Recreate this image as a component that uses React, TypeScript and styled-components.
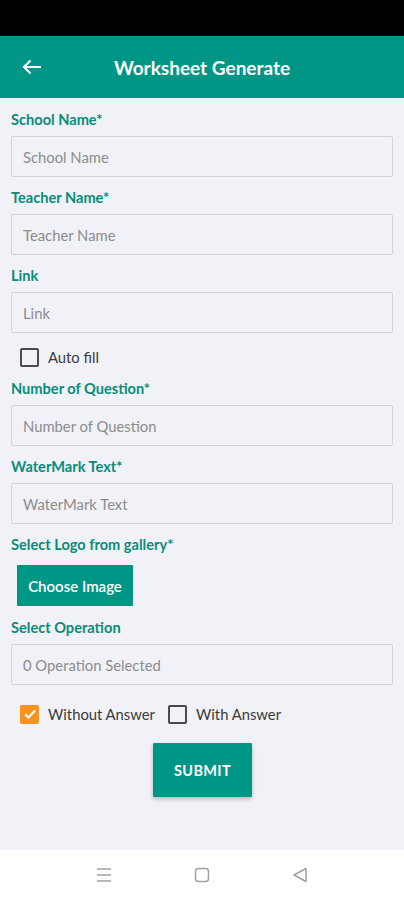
import styled, { createGlobalStyle } from 'styled-components';

const GlobalStyle = createGlobalStyle`
  html, body {
    margin: 0;
    padding: 0;
    background: #f1f2f7;
    font-family: Lato, "Noto Sans", sans-serif;
  }
  * { box-sizing: border-box; }
`;

const Screen = styled.div`
  display: flex;
  flex-direction: column;
  width: 404px;
  height: 900px;
  background: #f1f2f7;
`;

const StatusBar = styled.div`
  height: 36px;
  background: #000;
`;

const Header = styled.div`
  display: flex;
  align-items: center;
  height: 62px;
  background: #009685;
  padding-left: 22px;
`;

const BackButton = styled.div`
  display: flex;
  align-items: center;
  width: 20px;
  height: 20px;
`;

const Title = styled.div`
  flex: 1;
  text-align: center;
  margin-right: 42px;
  color: #fff;
  font-size: 19px;
  font-weight: 700;
`;

const Form = styled.div`
  display: flex;
  flex-direction: column;
  flex: 1;
  padding: 0 11px;
`;

const Label = styled.div<{ $top?: number; $bottom?: number }>`
  margin-top: ${(p) => p.$top ?? 12}px;
  margin-bottom: ${(p) => p.$bottom ?? 7}px;
  height: 18px;
  line-height: 18px;
  color: #078d7b;
  font-size: 14.6px;
  font-weight: 700;
`;

const Input = styled.div`
  display: flex;
  align-items: center;
  height: 41px;
  padding-left: 11px;
  border: 1.5px solid #d3d4d8;
  border-radius: 2px;
  color: #8c8c8c;
  font-size: 14.8px;
`;

const CheckRow = styled.div<{ $top: number }>`
  display: flex;
  align-items: center;
  height: 20px;
  margin-top: ${(p) => p.$top}px;
  padding-left: 9px;
`;

const CheckItem = styled.div`
  display: flex;
  align-items: center;
  margin-right: 13px;
`;

const Box = styled.div<{ $checked?: boolean }>`
  display: flex;
  align-items: center;
  justify-content: center;
  width: 19px;
  height: 19px;
  border-radius: 2px;
  border: ${(p) => (p.$checked ? 'none' : '2px solid #4a4a4a')};
  background: ${(p) => (p.$checked ? '#f7931e' : 'transparent')};
  margin-right: 9px;
`;

const CheckText = styled.span`
  color: #3a3a3a;
  font-size: 14.8px;
`;

const ChooseButton = styled.div`
  display: flex;
  align-items: center;
  justify-content: center;
  width: 116px;
  height: 41px;
  margin-left: 6px;
  background: #009685;
  color: #fff;
  font-size: 15px;
  font-weight: 600;
  border-radius: 1px;
`;

const SubmitButton = styled.div`
  display: flex;
  align-items: center;
  justify-content: center;
  align-self: center;
  width: 99px;
  height: 54px;
  margin-top: 19px;
  margin-left: 1px;
  background: #009685;
  color: #fff;
  font-size: 14.5px;
  font-weight: 700;
  letter-spacing: 0.3px;
  border-radius: 1px;
  box-shadow: 0 2px 4px rgba(0, 0, 0, 0.25);
`;

const NavBar = styled.div`
  display: flex;
  align-items: center;
  justify-content: center;
  gap: 82px;
  height: 50px;
  background: #fff;
`;

const NavIcon = styled.svg`
  width: 16px;
  height: 16px;
`;

const fields = [
  { label: 'School Name*', placeholder: 'School Name' },
  { label: 'Teacher Name*', placeholder: 'Teacher Name' },
  { label: 'Link', placeholder: 'Link' },
];

const Check = () => (
  <svg width="14" height="14" viewBox="0 0 14 14">
    <path d="M2 7.2 L5.5 10.5 L12 3.5" fill="none" stroke="#fff" strokeWidth="2" />
  </svg>
);

export default function App() {
  return (
    <Screen>
      <GlobalStyle />
      <StatusBar />
      <Header>
        <BackButton>
          <svg width="20" height="16" viewBox="0 0 20 16">
            <path d="M19 8 H2 M8.5 1.5 L2 8 L8.5 14.5" fill="none" stroke="#fff" strokeWidth="2.2" />
          </svg>
        </BackButton>
        <Title>Worksheet Generate</Title>
      </Header>
      <Form>
        {fields.map((f, i) => (
          <div key={f.label}>
            <Label $top={i === 0 ? 13 : 12}>{f.label}</Label>
            <Input>{f.placeholder}</Input>
          </div>
        ))}
        <CheckRow $top={14}>
          <CheckItem>
            <Box />
            <CheckText>Auto fill</CheckText>
          </CheckItem>
        </CheckRow>
        <Label $top={13}>Number of Question*</Label>
        <Input>Number of Question</Input>
        <Label>WaterMark Text*</Label>
        <Input>WaterMark Text</Input>
        <Label $bottom={11}>Select Logo from gallery*</Label>
        <ChooseButton>Choose Image</ChooseButton>
        <Label $top={13}>Select Operation</Label>
        <Input>0 Operation Selected</Input>
        <CheckRow $top={19}>
          <CheckItem>
            <Box $checked>
              <Check />
            </Box>
            <CheckText>Without Answer</CheckText>
          </CheckItem>
          <CheckItem>
            <Box />
            <CheckText>With Answer</CheckText>
          </CheckItem>
        </CheckRow>
        <SubmitButton>SUBMIT</SubmitButton>
      </Form>
      <NavBar>
        <NavIcon viewBox="0 0 16 16">
          <path d="M1 2 H15 M1 8 H15 M1 14 H15" stroke="#a0a0a0" strokeWidth="1.5" />
        </NavIcon>
        <NavIcon viewBox="0 0 16 16">
          <rect x="1.5" y="1.5" width="13" height="13" rx="3" fill="none" stroke="#a0a0a0" strokeWidth="1.5" />
        </NavIcon>
        <NavIcon viewBox="0 0 16 16">
          <path d="M14 1.5 V14.5 L2 8 Z" fill="none" stroke="#a0a0a0" strokeWidth="1.5" strokeLinejoin="round" />
        </NavIcon>
      </NavBar>
    </Screen>
  );
}
